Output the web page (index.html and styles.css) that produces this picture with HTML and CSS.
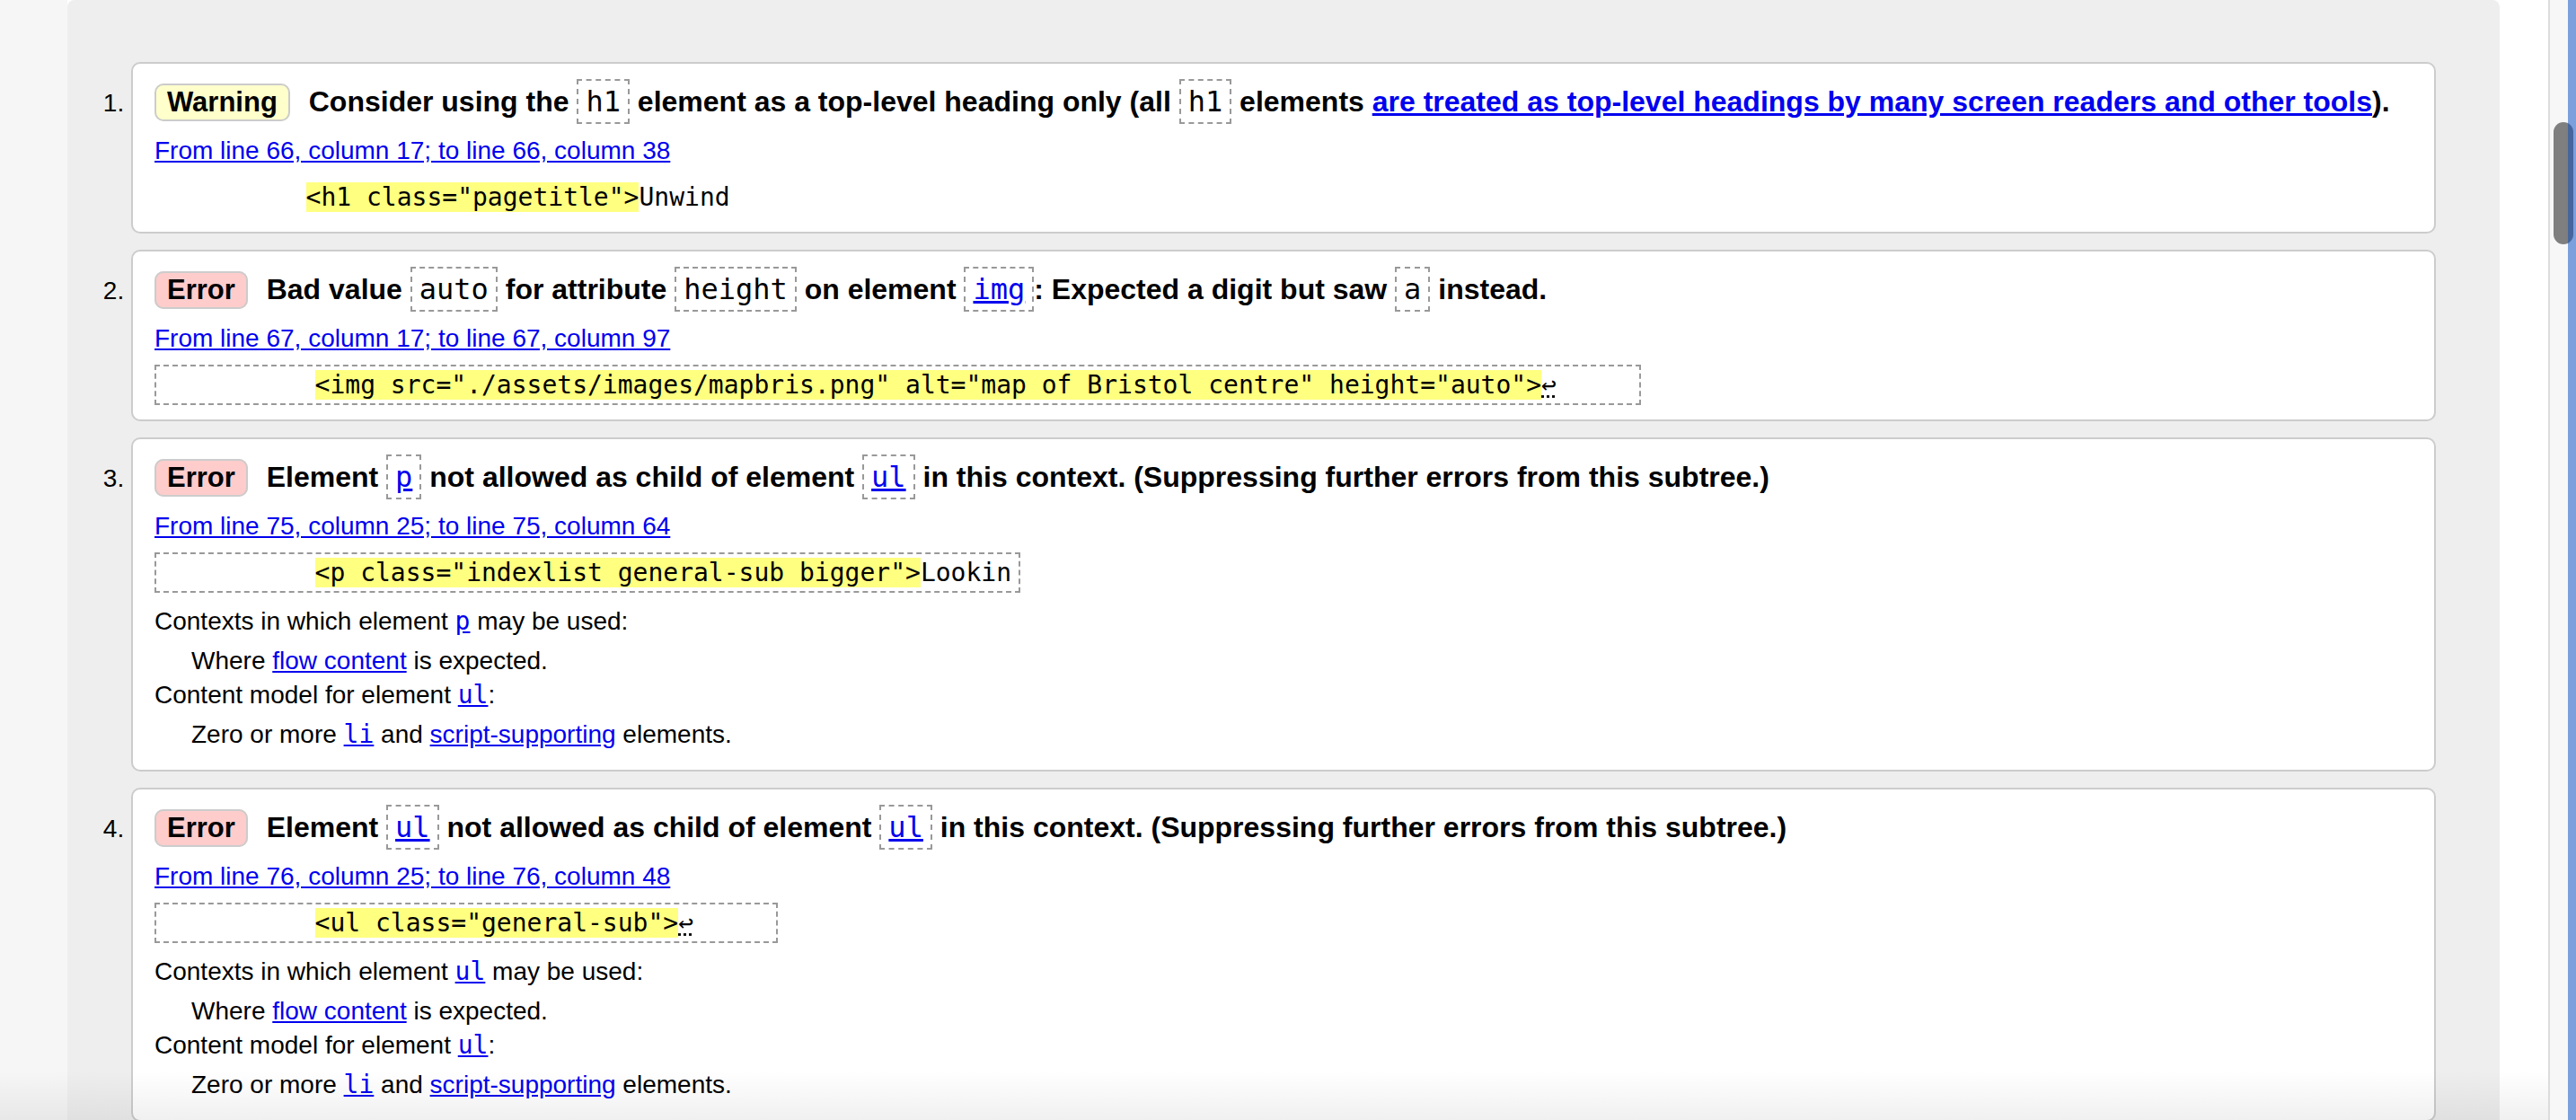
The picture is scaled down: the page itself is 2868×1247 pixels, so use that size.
FILE: index.html
```html
<!DOCTYPE html>
<html lang="en">
<head>
<meta charset="utf-8">
<title>Validation results</title>
<link rel="stylesheet" href="styles.css">
</head>
<body>
<div class="window">
  <div class="gutter-left"></div>
  <main class="panel">
    <ol class="messages">
      <li class="msg">
        <p class="msg-head"><span class="badge badge-warning">Warning</span> Consider using the <code class="tag">h1</code> element as a top-level heading only (all <code class="tag">h1</code> elements <a href="#">are treated as top-level headings by many screen readers and other tools</a>).</p>
        <p class="location"><a href="#">From line 66, column 17; to line 66, column 38</a></p>
        <p class="extract extract-plain"><code>          <mark>&lt;h1 class="pagetitle"&gt;</mark>Unwind</code></p>
      </li>
      <li class="msg">
        <p class="msg-head"><span class="badge badge-error">Error</span> Bad value <code class="tag">auto</code> for attribute <code class="tag">height</code> on element <code class="tag"><a href="#">img</a></code>: Expected a digit but saw <code class="tag">a</code> instead.</p>
        <p class="location"><a href="#">From line 67, column 17; to line 67, column 97</a></p>
        <p class="extract"><code>          <mark>&lt;img src="./assets/images/mapbris.png" alt="map of Bristol centre" height="auto"&gt;</mark><span class="lf">↩</span>     </code></p>
      </li>
      <li class="msg">
        <p class="msg-head"><span class="badge badge-error">Error</span> Element <code class="tag"><a href="#">p</a></code> not allowed as child of element <code class="tag"><a href="#">ul</a></code> in this context. (Suppressing further errors from this subtree.)</p>
        <p class="location"><a href="#">From line 75, column 25; to line 75, column 64</a></p>
        <p class="extract"><code>          <mark>&lt;p class="indexlist general-sub bigger"&gt;</mark>Lookin</code></p>
        <dl class="ctx">
          <dt>Contexts in which element <a href="#"><code>p</code></a> may be used:</dt>
          <dd>Where <a href="#">flow content</a> is expected.</dd>
          <dt>Content model for element <a href="#"><code>ul</code></a>:</dt>
          <dd>Zero or more <a href="#"><code>li</code></a> and <a href="#">script-supporting</a> elements.</dd>
        </dl>
      </li>
      <li class="msg">
        <p class="msg-head"><span class="badge badge-error">Error</span> Element <code class="tag"><a href="#">ul</a></code> not allowed as child of element <code class="tag"><a href="#">ul</a></code> in this context. (Suppressing further errors from this subtree.)</p>
        <p class="location"><a href="#">From line 76, column 25; to line 76, column 48</a></p>
        <p class="extract"><code>          <mark>&lt;ul class="general-sub"&gt;</mark><span class="lf">↩</span>     </code></p>
        <dl class="ctx">
          <dt>Contexts in which element <a href="#"><code>ul</code></a> may be used:</dt>
          <dd>Where <a href="#">flow content</a> is expected.</dd>
          <dt>Content model for element <a href="#"><code>ul</code></a>:</dt>
          <dd>Zero or more <a href="#"><code>li</code></a> and <a href="#">script-supporting</a> elements.</dd>
        </dl>
      </li>
    </ol>
  </main>
  <div class="gutter-right"></div>
  <div class="scrollbar">
    <div class="track"></div>
    <div class="edge"></div>
    <div class="thumb"></div>
  </div>
  <div class="fade"></div>
</div>
</body>
</html>
```

FILE: styles.css
```css
html, body {
  margin: 0;
  padding: 0;
  height: 100%;
}

body {
  overflow: hidden;
  background: #fff;
  color: #000;
  font-family: "Liberation Sans", Arial, sans-serif;
  font-size: 28px;
}

.window {
  position: relative;
  display: flex;
  height: 1247px;
  overflow: hidden;
}

.gutter-left {
  flex: none;
  width: 75px;
  background: #f6f6f6;
}

.panel {
  flex: none;
  width: 2708px;
  background: #eeeeee;
  border-radius: 8px 8px 0 0;
}

.gutter-right {
  flex: 1;
  background: #fff;
}

.scrollbar {
  position: relative;
  flex: none;
  display: flex;
  width: 29px;
  border-left: 2px solid #dcdcdc;
}

.track {
  flex: none;
  width: 20px;
  background: #f7f7f7;
}

.edge {
  flex: 1;
  background: #7ba0dc;
}

.thumb {
  position: absolute;
  left: 4px;
  top: 136px;
  width: 22px;
  height: 136px;
  border-radius: 11px;
  background: linear-gradient(to right, #7f7f7f 16px, #46659d 16px);
}

.fade {
  position: absolute;
  left: 0;
  bottom: 0;
  width: 2837px;
  height: 55px;
  background: linear-gradient(to bottom, rgba(0, 0, 0, 0), rgba(0, 0, 0, 0.06));
  pointer-events: none;
}

a {
  color: #0000ee;
}

.messages {
  list-style: decimal;
  margin: 0;
  padding: 69px 71px 0;
}

.msg {
  background: #fff;
  border: 2px solid #cccccc;
  border-radius: 10px;
  padding: 24px 24px 16px;
  margin-bottom: 18px;
}

.msg::marker {
  font-size: 28px;
}

.msg-head {
  margin: 0;
  font-size: 32px;
  font-weight: bold;
  line-height: 36px;
  white-space: nowrap;
}

.badge {
  font-size: 31px;
  line-height: 1;
  border: 2px solid #cccccc;
  border-radius: 10px;
  padding: 1px 12px 2px;
  margin-right: 12px;
}

.badge-warning {
  background: #ffffcc;
}

.badge-error {
  background: #ffcccc;
}

.tag {
  font-family: "DejaVu Sans Mono", monospace;
  font-size: 32px;
  font-weight: normal;
  border: 2px dashed #999999;
  padding: 4px 8px;
}

.location {
  margin: 21px 0 0;
  line-height: 32px;
}

.extract {
  display: flex;
  margin: 13px 0 0;
}

.extract code {
  font-family: "DejaVu Sans Mono", monospace;
  font-size: 28px;
  line-height: normal;
  white-space: pre;
  border: 2px dashed #999999;
  padding: 4px 8px;
}

.extract-plain code {
  border-color: transparent;
  border-left: 0;
  border-right: 0;
  padding: 4px 0;
}

mark {
  background: #ffff80;
  color: #000;
}

.lf {
  text-decoration: underline dotted;
}

.ctx {
  margin: 16px 0 7px;
  line-height: 32px;
}

.ctx dt {
  margin: 6px 0 0;
}

.ctx dt:first-child {
  margin-top: 0;
}

.ctx dd {
  margin: 12px 0 0 41px;
}

.ctx code {
  font-family: "DejaVu Sans Mono", monospace;
  font-size: 28px;
}
```
